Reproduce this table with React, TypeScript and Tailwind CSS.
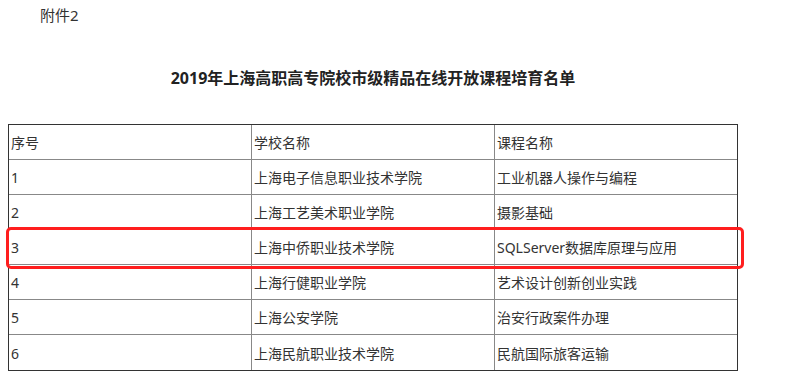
const rows = [
  ["序号", "学校名称", "课程名称"],
  ["1", "上海电子信息职业技术学院", "工业机器人操作与编程"],
  ["2", "上海工艺美术职业学院", "摄影基础"],
  ["3", "上海中侨职业技术学院", "SQLServer数据库原理与应用"],
  ["4", "上海行健职业学院", "艺术设计创新创业实践"],
  ["5", "上海公安学院", "治安行政案件办理"],
  ["6", "上海民航职业技术学院", "民航国际旅客运输"],
];

export default function App() {
  return (
    <div
      className="w-[790px] h-[378px] overflow-hidden bg-white text-[#333]"
      style={{ fontFamily: '"Noto Sans", "Noto Sans CJK SC", sans-serif' }}
    >
      <p className="pl-[40px] pt-[5px] text-[15px] leading-[20px]">附件2</p>

      <h2 className="mt-[42px] w-[746px] text-center text-[16px] font-bold leading-[22px] text-[#222]">
        2019年上海高职高专院校市级精品在线开放课程培育名单
      </h2>

      <div className="relative ml-[8px] mt-[35px] w-[730px]">
        <table className="w-full table-fixed border-separate border-spacing-0 border border-[#333] text-[14px]">
          <colgroup>
            <col className="w-[243px]" />
            <col className="w-[243px]" />
            <col />
          </colgroup>
          <tbody>
            {rows.map((r, i) => (
              <tr key={i}>
                {r.map((c, j) => (
                  <td
                    key={j}
                    className={
                      "h-[35px] px-[2px] pt-[2px] align-middle leading-[18px] border-[#888] " +
                      (j < 2 ? "border-r " : "") +
                      (i < rows.length - 1 ? "border-b" : "")
                    }
                  >
                    {c}
                  </td>
                ))}
              </tr>
            ))}
          </tbody>
        </table>

        {/* highlight over row 3 */}
        <div className="pointer-events-none absolute left-[-2px] top-[103px] h-[42px] w-[738px] rounded-[5px] border-[3px] border-[#ff1e1e]" />
      </div>
    </div>
  );
}
